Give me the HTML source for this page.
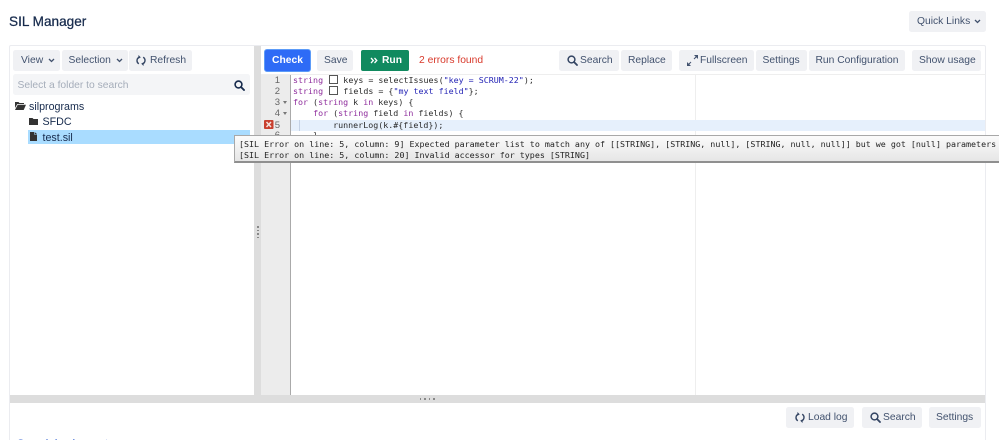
<!DOCTYPE html>
<html><head><meta charset="utf-8"><title>SIL Manager</title>
<style>
html,body{margin:0;padding:0;width:999px;height:440px;overflow:hidden;background:#fff}
body{position:relative;font-family:"Liberation Sans",sans-serif;font-size:10.3px;color:#42526e}
.a{position:absolute}
.b{position:absolute;height:21px;top:50px;background:#f0f1f4;border-radius:2.5px;line-height:22px;white-space:nowrap}
.b span{position:absolute;top:0;white-space:nowrap}
.b svg,.t svg{position:absolute}
.t{position:absolute;white-space:nowrap}
.code{position:absolute;left:293px;font:8.33px/11px "DejaVu Sans Mono",monospace;color:#2a2a2a;white-space:pre;height:11px}
.k{color:#8d2a9b}.s{color:#2323b5}
.box{display:inline-block;width:6.5px;height:7px;border:1px solid #555;margin:0 .7px 0 1px;vertical-align:-1px;box-sizing:content-box}
.n{position:absolute;left:262px;width:18px;text-align:right;font:9.5px/11px "Liberation Sans",sans-serif;color:#666}
.f{position:absolute;left:283px;width:0;height:0;border-left:2.3px solid transparent;border-right:2.3px solid transparent;border-top:3px solid #777}
.tip{position:absolute;left:234px;top:135px;width:775px;height:27.5px;box-sizing:border-box;border:1px solid #a8a8a8;border-bottom:2px solid #8f8f8f;background:linear-gradient(#fbfbfb,#e6e6e6);font:8.33px/11px "DejaVu Sans Mono",monospace;color:#222;white-space:pre;padding:3px 0 0 4px}
</style></head>
<body>
<div class="t" style="left:9px;top:12px;font-size:13.6px;line-height:20px;color:#172b4d;-webkit-text-stroke:.25px #172b4d">SIL Manager</div>

<div class="b" style="left:909px;top:11px;width:77px"><span style="left:8px">Quick Links</span>
<svg style="left:65px;top:8px" width="7" height="5" viewBox="0 0 7 5"><path d="M1 1l2.5 2.5L6 1" fill="none" stroke="#42526e" stroke-width="1.3"/></svg></div>

<!-- outer panel -->
<div class="a" style="left:9px;top:45px;width:977px;height:400px;box-sizing:border-box;border:1px solid #ebecf0;border-radius:2px"></div>

<!-- left -->
<div class="b" style="left:13px;width:47px"><span style="left:8px">View</span>
<svg style="left:35px;top:8px" width="7" height="5" viewBox="0 0 7 5"><path d="M1 1l2.5 2.5L6 1" fill="none" stroke="#42526e" stroke-width="1.3"/></svg></div>
<div class="b" style="left:61.500px;width:66px"><span style="left:7px">Selection</span>
<svg style="left:54px;top:8px" width="7" height="5" viewBox="0 0 7 5"><path d="M1 1l2.500 2.500L6 1" fill="none" stroke="#42526e" stroke-width="1.3"/></svg></div>
<div class="b" style="left:129px;width:63px"><span style="left:21px">Refresh</span>
<svg style="left:7px;top:5px" width="10" height="11" viewBox="0 0 10 11"><path d="M3.300 2.200C1.700 2.900 1 4.300 1 5.600c0 1.300.7 2.500 1.800 3.200M6.700 8.800C8.300 8.100 9 6.700 9 5.400c0-1.300-.7-2.500-1.800-3.200" fill="none" stroke="#344563" stroke-width="1.400"/><path d="M2.500 0l2.300 2.400-2.600 1.400zM7.500 11L5.200 8.600l2.600-1.400z" fill="#344563"/></svg></div>

<div class="a" style="left:13px;top:74px;width:237px;height:21px;background:#f4f5f7;border-radius:2.5px"></div>
<div class="t" style="left:17.500px;top:75px;line-height:21px;color:#a5adba">Select a folder to search</div>
<svg class="a" style="left:234px;top:80px" width="11" height="11" viewBox="0 0 11 11"><circle cx="4.500" cy="4.500" r="3.400" fill="none" stroke="#172b4d" stroke-width="1.600"/><path d="M7 7l3 3" stroke="#172b4d" stroke-width="1.900" stroke-linecap="round"/></svg>

<svg class="a" style="left:15px;top:101px" width="11" height="9" viewBox="0 0 11 9"><path d="M0 1h3.500l1 1H9v1H2.300L0 7z" fill="#333"/><path d="M2.700 3.700H11L8.700 9H0z" fill="#333"/></svg>
<div class="t" style="left:29px;top:100px;font-size:10.700px;line-height:14px;color:#172b4d">silprograms</div>
<svg class="a" style="left:29px;top:117px" width="9" height="8" viewBox="0 0 9 8"><path d="M0 1h3.500l1 1H9v6H0z" fill="#333"/></svg>
<div class="t" style="left:42.500px;top:115px;font-size:10.700px;line-height:14px;color:#172b4d">SFDC</div>
<div class="a" style="left:28px;top:130px;width:222px;height:14px;background:#a9dcff"></div>
<svg class="a" style="left:30px;top:132px" width="7" height="9" viewBox="0 0 7 9"><path d="M0 0h4v2.500h3V9H0zM4.600 0L7 2H4.600z" fill="#333"/></svg>
<div class="t" style="left:42.500px;top:131px;font-size:10.700px;line-height:14px;color:#172b4d">test.sil</div>

<!-- vertical splitter -->
<div class="a" style="left:254px;top:46px;width:6.500px;height:349px;background:#ddd"></div>
<div class="a" style="left:257px;top:226px;width:1.500px;height:1.500px;background:#888"></div>
<div class="a" style="left:257px;top:229.500px;width:1.500px;height:1.500px;background:#888"></div>
<div class="a" style="left:257px;top:233px;width:1.500px;height:1.500px;background:#888"></div>
<div class="a" style="left:257px;top:236.500px;width:1.500px;height:1.500px;background:#888"></div>

<!-- toolbar -->
<div class="a" style="left:264px;top:49px;width:47px;height:23px;box-sizing:border-box;background:#2e6bf6;border:1px solid #5c9bf8;border-radius:3px;color:#fff;font-weight:bold;line-height:22px;text-align:center">Check</div>
<div class="b" style="left:317px;width:36px"><span style="left:7px">Save</span></div>
<div class="b" style="left:361px;top:49.500px;width:48px;background:#108a5f;border-radius:2px;color:#fff;font-weight:bold"><span style="left:21px">Run</span>
<svg style="left:9px;top:7px" width="8" height="7" viewBox="0 0 8 7"><path d="M1 1l2.300 2.500L1 6M4.500 1l2.300 2.500L4.500 6" fill="none" stroke="#fff" stroke-width="1.300"/></svg></div>
<div class="t" style="left:419px;top:50px;line-height:22px;color:#d8392b">2 errors found</div>

<div class="b" style="left:559px;width:60px"><span style="left:21px">Search</span>
<svg style="left:8px;top:5px" width="11" height="11" viewBox="0 0 11 11"><circle cx="4.500" cy="4.500" r="3.400" fill="none" stroke="#344563" stroke-width="1.500"/><path d="M7 7l3 3" stroke="#344563" stroke-width="1.800" stroke-linecap="round"/></svg></div>
<div class="b" style="left:621px;width:51px"><span style="left:7px">Replace</span></div>
<div class="b" style="left:679px;width:75px"><span style="left:21px">Fullscreen</span>
<svg style="left:8px;top:5px" width="11" height="11" viewBox="0 0 11 11"><path d="M1 10l3-3M7 4l3-3" stroke="#42526e" stroke-width="1"/><path d="M0 7l0 4 4 0zM11 0l-4 0 4 4z" fill="#42526e"/></svg></div>
<div class="b" style="left:756px;width:51px"><span style="left:6.500px">Settings</span></div>
<div class="b" style="left:809px;width:96px"><span style="left:6.500px">Run Configuration</span></div>
<div class="b" style="left:912px;width:69px"><span style="left:7px">Show usage</span></div>

<!-- editor -->
<div class="a" style="left:261px;top:74px;width:725px;height:1px;background:#eee"></div>
<div class="a" style="left:261px;top:75px;width:28.500px;height:320px;background:#ececec"></div>
<div class="a" style="left:289.500px;top:75px;width:1.200px;height:320px;background:#aaa"></div>
<div class="a" style="left:695px;top:75px;width:1px;height:320px;background:#eee"></div>
<div class="a" style="left:291px;top:120px;width:694px;height:10.500px;background:#e6f0fc"></div>
<div class="a" style="left:298.500px;top:120px;width:1px;height:10.500px;background:#c4d2e6"></div>

<div class="n" style="top:75px">1</div>
<div class="n" style="top:86px">2</div>
<div class="n" style="top:97px">3</div><div class="f" style="top:101px"></div>
<div class="n" style="top:108px">4</div><div class="f" style="top:112px"></div>
<div class="n" style="top:119.500px">5</div>
<div class="n" style="top:130px">6</div>
<svg class="a" style="left:264px;top:120px" width="9.500" height="9" viewBox="0 0 9.500 9"><rect width="9.500" height="9" rx="1" fill="#c9402f"/><path d="M2.500 2l4.500 5M7 2L2.500 7" stroke="#f3e3de" stroke-width="1.500"/></svg>

<div class="code" style="top:75px"><span class="k">string</span> <span class="box"></span> keys = selectIssues(<span class="s">"key = SCRUM-22"</span>);</div>
<div class="code" style="top:86px"><span class="k">string</span> <span class="box"></span> fields = {<span class="s">"my text field"</span>};</div>
<div class="code" style="top:97px"><span class="k">for</span> (<span class="k">string</span> k <span class="k">in</span> keys) {</div>
<div class="code" style="top:108px">    <span class="k">for</span> (<span class="k">string</span> field <span class="k">in</span> fields) {</div>
<div class="code" style="top:119.500px">        runnerLog(k.#{field});</div>
<div class="code" style="top:130px">    }</div>

<div class="tip">[SIL Error on line: 5, column: 9] Expected parameter list to match any of [[STRING], [STRING, null], [STRING, null, null]] but we got [null] parameters
[SIL Error on line: 5, column: 20] Invalid accessor for types [STRING]</div>

<!-- horizontal splitter -->
<div class="a" style="left:10px;top:395px;width:975px;height:8px;background:#ddd"></div>
<div class="a" style="left:419.500px;top:398px;width:1.500px;height:1.500px;background:#888"></div>
<div class="a" style="left:424px;top:398px;width:1.500px;height:1.500px;background:#888"></div>
<div class="a" style="left:428.500px;top:398px;width:1.500px;height:1.500px;background:#888"></div>
<div class="a" style="left:433px;top:398px;width:1.500px;height:1.500px;background:#888"></div>

<!-- bottom -->
<div class="b" style="left:786px;top:407px;width:68px"><span style="left:22px">Load log</span>
<svg style="left:9px;top:5px" width="10" height="11" viewBox="0 0 10 11"><path d="M3.300 2.200C1.700 2.900 1 4.300 1 5.600c0 1.300.7 2.500 1.800 3.200M6.700 8.800C8.300 8.100 9 6.700 9 5.400c0-1.300-.7-2.500-1.800-3.200" fill="none" stroke="#344563" stroke-width="1.400"/><path d="M2.500 0l2.300 2.400-2.600 1.400zM7.500 11L5.200 8.600l2.600-1.400z" fill="#344563"/></svg></div>
<div class="b" style="left:862px;top:407px;width:60px"><span style="left:21px">Search</span>
<svg style="left:8px;top:5px" width="11" height="11" viewBox="0 0 11 11"><circle cx="4.500" cy="4.500" r="3.400" fill="none" stroke="#344563" stroke-width="1.500"/><path d="M7 7l3 3" stroke="#344563" stroke-width="1.800" stroke-linecap="round"/></svg></div>
<div class="b" style="left:929px;top:407px;width:52px"><span style="left:7px">Settings</span></div>
<div class="t" style="left:17px;top:436.500px;font-size:11px;line-height:14px;color:#2a5bd0">Search log is empty</div>
</body></html>
